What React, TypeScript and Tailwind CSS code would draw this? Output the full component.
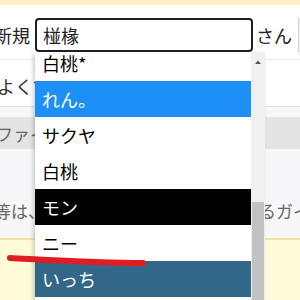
import React from 'react'

const items = [
  { label: '白桃*', cls: 'bg-white text-black' },
  { label: 'れん。', cls: 'bg-[#1e8ff7] text-white' },
  { label: 'サクヤ', cls: 'bg-white text-black' },
  { label: '白桃', cls: 'bg-white text-black' },
  { label: 'モン', cls: 'bg-black text-white' },
  { label: 'ニー', cls: 'bg-white text-black' },
  { label: 'いっち', cls: 'bg-[#33678a] text-white' },
  { label: 'ゆう', cls: 'bg-white text-black' },
]

export default function App() {
  return (
    <div
      className="relative w-[300px] h-[300px] overflow-hidden bg-white text-[18px] leading-none"
      style={{ fontFamily: '"Noto Sans CJK JP", "Noto Sans", sans-serif' }}
    >
      <div className="h-[5px] bg-[#fcefc6]" />

      <div className="flex items-center h-[55px] pt-[5px] -ml-[6px] border-b border-[#ececec]">
        <span className="text-[#222] w-[41px] shrink-0">新規</span>
        <div className="w-[218px] h-[34px] shrink-0 rounded-[4px] border-2 border-[#1f1f1f] flex items-center pl-[6px] text-[#222]">
          椪椽
        </div>
        <span className="ml-[3px] text-[#222] shrink-0">さん</span>
        <div className="ml-[6px] w-[20px] h-[34px] shrink-0 bg-[#ececec] border border-[#d8d8d8]" />
      </div>

      <div className="flex items-center h-[47px] pt-[5px] -ml-[3px] border-b border-[#e2e2e2] text-[#333]">
        よくて
      </div>

      <div className="bg-[#f7f7f9] h-[131px] pt-[10px]">
        <div className="h-[32px] bg-[#e4e4e4] flex items-center -ml-[4px] text-[#666] text-[17px]">
          ファイ
        </div>
        <div className="mt-[53px] flex justify-between text-[#666] text-[17px] -ml-[6px] -mr-[10px]">
          <span>等は、</span>
          <span>るガイ</span>
        </div>
      </div>

      <div className="h-[62px] border-t-2 border-[#f4e2a4] bg-[#fdfbd8]" />

      <div className="absolute left-[35px] top-[52px] w-[230px] h-[260px] flex bg-white shadow-[-2px_2px_4px_rgba(0,0,0,0.18)]">
        <div className="w-[216px] overflow-hidden">
          <div className="-mt-[7px]">
            {items.map((it) => (
              <div key={it.label} className={`h-[36px] flex items-center pl-[7px] ${it.cls}`}>
                {it.label}
              </div>
            ))}
          </div>
        </div>
        <div className="w-[14px] bg-[#f0f0f0] flex flex-col items-center">
          <svg width="8" height="6" viewBox="0 0 8 6" className="mt-[7px]">
            <path d="M1 5 L4 1.5 L7 5 Z" fill="#5a5a5a" />
          </svg>
          <div className="mt-[137px] w-[12px] flex-1 bg-[#c1c1c1]" />
        </div>
      </div>

      <svg className="absolute left-0 top-0 pointer-events-none" width="300" height="300">
        <path d="M10 258 C 50 260, 100 263, 143 263" stroke="#e01b22" strokeWidth="6" strokeLinecap="round" fill="none" />
      </svg>
    </div>
  )
}
